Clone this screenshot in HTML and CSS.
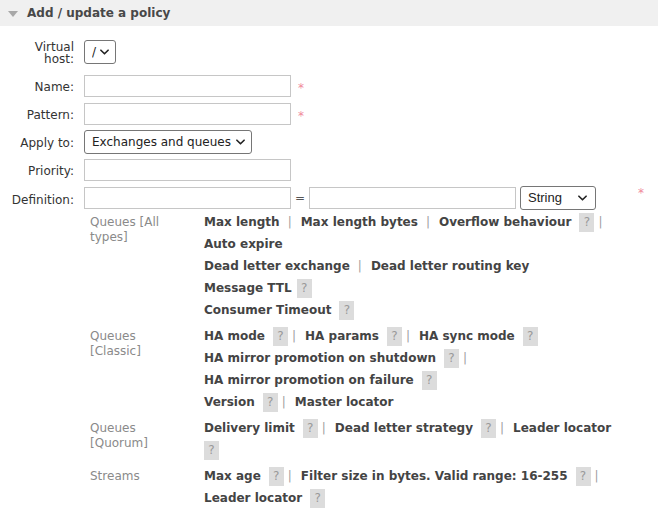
FILE: index.html
```html
<!DOCTYPE html>
<html>
<head>
<meta charset="utf-8">
<link rel="stylesheet" href="styles.css">
</head>
<body>
<div class="section">
  <div class="section-head"><span class="tri"></span><span class="title">Add / update a policy</span></div>
  <div class="form">
    <div class="row row-vhost">
      <label class="lbl">Virtual host:</label>
      <div class="ctl">
        <span class="sel sel-vhost"><select><option>/</option></select><svg class="chev" viewBox="0 0 10 6"><path d="M1 1 L5 5 L9 1"/></svg></span>
      </div>
    </div>
    <div class="row">
      <label class="lbl">Name:</label>
      <div class="ctl"><input class="inp" type="text"><span class="req">*</span></div>
    </div>
    <div class="row">
      <label class="lbl">Pattern:</label>
      <div class="ctl"><input class="inp" type="text"><span class="req">*</span></div>
    </div>
    <div class="row">
      <label class="lbl">Apply to:</label>
      <div class="ctl">
        <span class="sel sel-apply"><select><option>Exchanges and queues</option></select><svg class="chev" viewBox="0 0 10 6"><path d="M1 1 L5 5 L9 1"/></svg></span>
      </div>
    </div>
    <div class="row">
      <label class="lbl">Priority:</label>
      <div class="ctl"><input class="inp" type="text"></div>
    </div>
    <div class="row row-def">
      <label class="lbl">Definition:</label>
      <div class="ctl def">
        <input class="inp" type="text"><span class="eq">=</span><input class="inp inp2" type="text">
        <span class="sel sel-type"><select><option>String</option></select><svg class="chev" viewBox="0 0 10 6"><path d="M1 1 L5 5 L9 1"/></svg></span>
        <span class="req req-def">*</span>
      </div>
    </div>
  </div>

  <div class="groups">
    <div class="group">
      <div class="glabel">Queues [All types]</div>
      <div class="keys">
        <div class="line"><span class="k">Max length</span><span class="sep">|</span><span class="k">Max length bytes</span><span class="sep">|</span><span class="k">Overflow behaviour</span><span class="help">?</span><span class="sep">|</span></div>
        <div class="line"><span class="k">Auto expire</span></div>
        <div class="line"><span class="k">Dead letter exchange</span><span class="sep">|</span><span class="k">Dead letter routing key</span></div>
        <div class="line"><span class="k">Message TTL</span><span class="help tight">?</span></div>
        <div class="line"><span class="k">Consumer Timeout</span><span class="help">?</span></div>
      </div>
    </div>
    <div class="group">
      <div class="glabel">Queues [Classic]</div>
      <div class="keys">
        <div class="line"><span class="k">HA mode</span><span class="help">?</span><span class="sep">|</span><span class="k">HA params</span><span class="help">?</span><span class="sep">|</span><span class="k">HA sync mode</span><span class="help">?</span></div>
        <div class="line"><span class="k">HA mirror promotion on shutdown</span><span class="help">?</span><span class="sep">|</span></div>
        <div class="line"><span class="k">HA mirror promotion on failure</span><span class="help">?</span></div>
        <div class="line"><span class="k">Version</span><span class="help">?</span><span class="sep">|</span><span class="k">Master locator</span></div>
      </div>
    </div>
    <div class="group">
      <div class="glabel">Queues [Quorum]</div>
      <div class="keys">
        <div class="line"><span class="k">Delivery limit</span><span class="help">?</span><span class="sep">|</span><span class="k">Dead letter strategy</span><span class="help">?</span><span class="sep">|</span><span class="k">Leader locator</span></div>
        <div class="line"><span class="help first">?</span></div>
      </div>
    </div>
    <div class="group">
      <div class="glabel">Streams</div>
      <div class="keys">
        <div class="line"><span class="k">Max age</span><span class="help">?</span><span class="sep">|</span><span class="k">Filter size in bytes. Valid range: 16-255</span><span class="help">?</span><span class="sep">|</span></div>
        <div class="line"><span class="k">Leader locator</span><span class="help">?</span></div>
      </div>
    </div>
  </div>
</div>
</body>
</html>
```
FILE: styles.css
```css
html, body {
  margin: 0;
  padding: 0;
  background: #fff;
}
body {
  font-family: "DejaVu Sans", Verdana, sans-serif;
  font-size: 12px;
  color: #444;
}
.section-head {
  height: 26px;
  background: #f0f0f0;
  display: flex;
  align-items: center;
  padding-left: 8px;
}
.tri {
  width: 0;
  height: 0;
  border-left: 5px solid transparent;
  border-right: 5px solid transparent;
  border-top: 6px solid #a8a8a8;
  margin-right: 9px;
  margin-top: 1px;
}
.title {
  font-weight: bold;
  color: #484848;
}
.form {
  padding: 12px 0 0 8px;
}
.row {
  display: grid;
  grid-template-columns: 66px 1fr;
  column-gap: 10px;
  align-items: center;
  height: 28px;
}
.row-vhost {
  margin-bottom: 6px;
}
.row-def {
  height: 27px;
}
.lbl {
  text-align: right;
  line-height: 12px;
  color: #333;
  padding-top: 1px;
}
.row-def .lbl {
  padding-top: 5px;
}
.ctl {
  display: flex;
  align-items: center;
}
.inp {
  box-sizing: border-box;
  width: 207px;
  height: 22px;
  border: 1px solid #c6c6c6;
  border-radius: 0;
  margin: 0;
  padding: 0 4px;
  font-family: "DejaVu Sans", sans-serif;
  font-size: 12px;
  outline: none;
}
.inp2 {
  width: 207px;
}
.req {
  color: #f0899a;
  margin-left: 7px;
  font-size: 12px;
  line-height: 12px;
  margin-top: 3px;
}
.def .req-def {
  margin-left: auto;
  margin-right: 14px;
  align-self: flex-start;
  margin-top: 1px;
}
.eq {
  width: 18px;
  text-align: center;
  color: #555;
}
.sel {
  position: relative;
  display: inline-block;
  height: 24px;
}
.sel select {
  appearance: none;
  -webkit-appearance: none;
  box-sizing: border-box;
  height: 24px;
  margin: 0;
  border: 1px solid #767676;
  border-radius: 3px;
  background: #fff;
  color: #222;
  font-family: "DejaVu Sans", sans-serif;
  font-size: 12px;
  padding: 0 20px 0 7px;
  outline: none;
}
.sel .chev {
  position: absolute;
  top: 9px;
  width: 9px;
  height: 6px;
  fill: none;
  stroke: #222;
  stroke-width: 1.8;
  stroke-linecap: round;
  stroke-linejoin: round;
  pointer-events: none;
}
.sel-vhost select {
  width: 32px;
  padding: 0 10px 0 7px;
}
.sel-vhost .chev { right: 7px; }
.sel-apply select { width: 168px; }
.sel-apply .chev { right: 7px; }
.sel-type {
  margin-left: 4px;
}
.sel-type select {
  width: 76px;
  font-family: "Liberation Sans", Arial, sans-serif;
  font-size: 13px;
}
.sel-type .chev { right: 9px; }

.groups {
  margin-left: 90px;
  display: flex;
  flex-direction: column;
  gap: 4px;
}
.group {
  display: grid;
  grid-template-columns: 96px 1fr;
  column-gap: 18px;
}
.glabel {
  color: #8a8a8a;
  line-height: 15px;
  padding-top: 4px;
}
.line {
  height: 22px;
  line-height: 22px;
  white-space: nowrap;
  display: flex;
  align-items: center;
}
.k {
  font-weight: bold;
  color: #444;
}
.sep {
  color: #a0a0a0;
  padding: 0 9px 0 8px;
}
.help + .sep {
  padding-left: 4px;
}
.help {
  display: inline-block;
  width: 15px;
  height: 19px;
  line-height: 19px;
  text-align: center;
  background: #dcdcdc;
  color: #999;
  margin-left: 8px;
}
.help.tight {
  margin-left: 5px;
}
.help.first {
  margin-left: 0;
}
```
